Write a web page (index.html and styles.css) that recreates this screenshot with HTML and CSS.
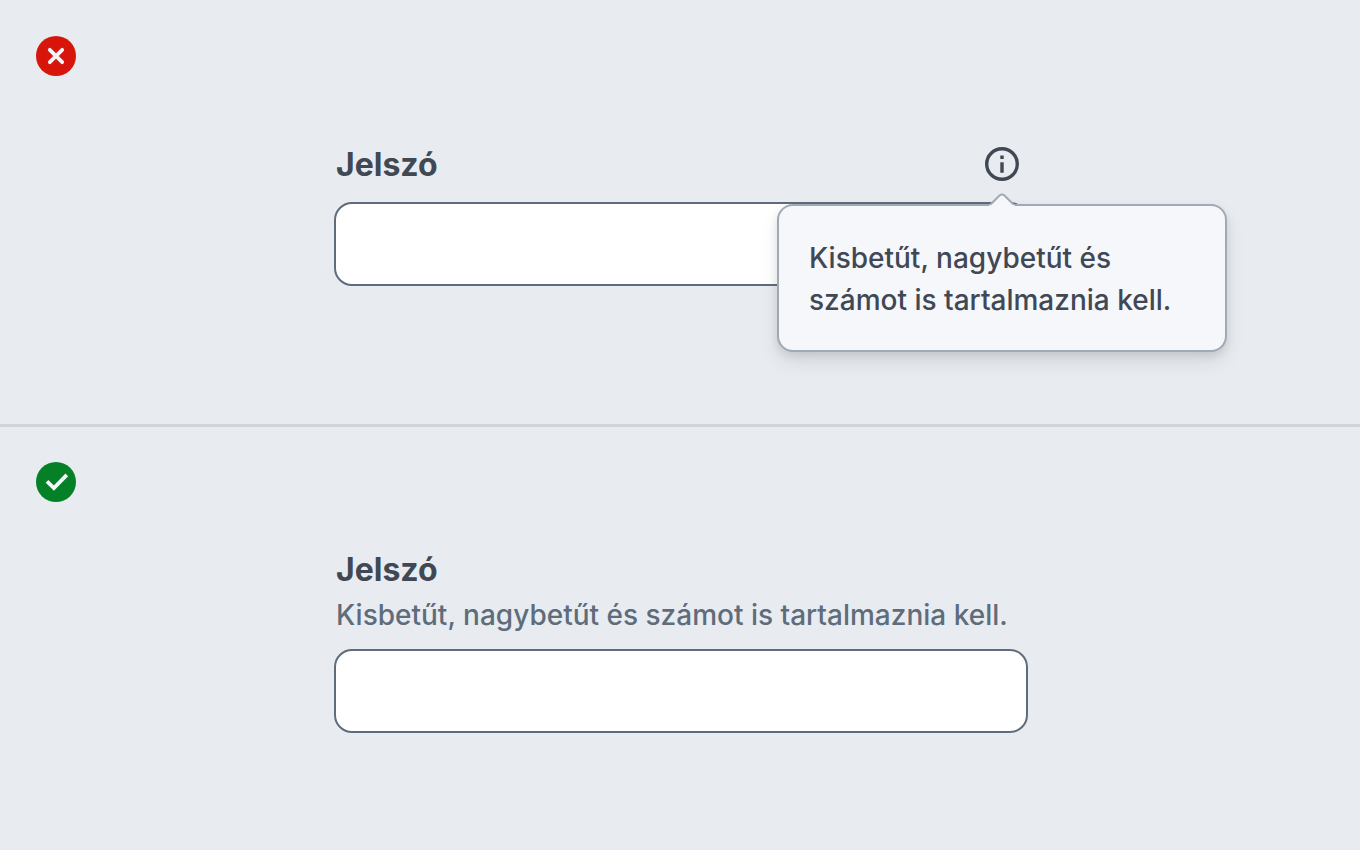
FILE: index.html
```
<!DOCTYPE html>
<html lang="hu">
<head>
    <meta charset="UTF-8" />
    <meta name="viewport" content="width=device-width, initial-scale=1" />
    <title>Jelszó</title>
    <link rel="stylesheet" href="styles.css">
</head>
<body>

<section class="panel">
    <svg class="badge" viewBox="0 0 40 40" role="img" aria-label="Kerülendő">
        <circle cx="20" cy="20" r="20" fill="#d8150a" />
        <path d="M13.8 13.8l12.4 12.4M26.2 13.8L13.8 26.2" fill="none" stroke="#f4f6fa" stroke-width="3.8" stroke-linecap="round" />
    </svg>

    <div class="field">
        <div class="label-row">
            <label for="password">Jelszó</label>
            <div class="info">
                <button type="button" class="info-button" aria-label="Információ" aria-describedby="password-tip">
                    <svg viewBox="0 0 40 40" aria-hidden="true">
                        <circle cx="20" cy="20" r="15.3" fill="none" stroke="#414854" stroke-width="3.4" />
                        <path d="M18.3 11.4h3.4v3.6h-3.4zM18.3 18.2h3.4v10.6h-3.4z" fill="#414854" />
                    </svg>
                </button>
                <div class="tooltip" id="password-tip" role="tooltip">
                    <svg class="tooltip-arrow" viewBox="0 0 28 14" aria-hidden="true">
                        <path d="M1 14L3 12L11.5 3.5Q14 1.4 16.5 3.5L25 12L27 14z" fill="#f5f7fb" />
                        <path d="M2.5 12.5L11.5 3.5Q14 1.4 16.5 3.5L25.5 12.5" fill="none" stroke="#a0aab7" stroke-width="2" />
                    </svg>
                    Kisbetűt, nagybetűt és számot is tartalmaznia kell.
                </div>
            </div>
        </div>
        <input type="password" id="password" />
    </div>
</section>

<hr class="divider" />

<section class="panel">
    <svg class="badge" viewBox="0 0 40 40" role="img" aria-label="Ajánlott">
        <circle cx="20" cy="20" r="20" fill="#048027" />
        <path d="M11 19.4l6.9 6.6L30.8 12.8" fill="none" stroke="#f4f6fa" stroke-width="3.8" />
    </svg>

    <div class="field">
        <div class="label-row">
            <label for="password-hinted">Jelszó</label>
        </div>
        <p class="hint" id="password-hint">Kisbetűt, nagybetűt és számot is tartalmaznia kell.</p>
        <input type="password" id="password-hinted" aria-describedby="password-hint" />
    </div>
</section>

</body>
</html>
```
FILE: styles.css
```
* {
    box-sizing: border-box;
}
body {
    margin: 0;
    min-height: 100vh;
    display: grid;
    grid-template-rows: 1fr auto 1fr;
    background-color: #e8ecf1;
    color: #414854;
    font-family: Inter, sans-serif;
    font-size: 28px;
    font-weight: 500;
    line-height: 42px;
}
.panel {
    position: relative;
    display: flex;
    justify-content: center;
    align-items: center;
    padding: 6px 0 0 2px;
}
.badge {
    position: absolute;
    top: 36px;
    left: 36px;
    width: 40px;
    height: 40px;
}
.divider {
    width: 100%;
    height: 2px;
    margin: 0;
    border: none;
    background-color: #d0d5da;
    box-shadow: 0 1px 0 #d0d5da;
}

.field {
    width: 694px;
    max-width: 100%;
}
.label-row {
    display: flex;
    justify-content: space-between;
    align-items: center;
    height: 40px;
    padding: 0 6px 0 2px;
}
label {
    padding-top: 2px;
    font-size: 32px;
    font-weight: 700;
    line-height: 40px;
}
.hint {
    margin: 5px 0 0;
    padding-left: 2px;
    color: #5f6c7b;
}
input {
    display: block;
    width: 100%;
    height: 84px;
    margin-top: 18px;
    padding: 0 24px;
    font: inherit;
    color: inherit;
    background-color: #fff;
    border: 2px solid #5f6c7b;
    border-radius: 18px;
}
.hint + input {
    margin-top: 13px;
}

/* info button and its bubble */
.info {
    position: relative;
}
.info-button {
    display: block;
    width: 40px;
    height: 40px;
    padding: 0;
    background: none;
    border: none;
    cursor: pointer;
}
.info-button svg {
    display: block;
}
.tooltip {
    position: absolute;
    top: 60px;
    left: 50%;
    z-index: 1;
    width: 450px;
    padding: 31px 30px 29px;
    transform: translateX(-50%);
    background-color: #f5f7fb;
    border: 2px solid #a0aab7;
    border-radius: 16px;
    box-shadow: 0 4px 8px rgba(0, 0, 0, 0.1), 0 10px 20px rgba(0, 0, 0, 0.08);
}
.tooltip-arrow {
    position: absolute;
    top: -14px;
    left: 50%;
    width: 28px;
    height: 14px;
    margin-left: -14px;
}
```
